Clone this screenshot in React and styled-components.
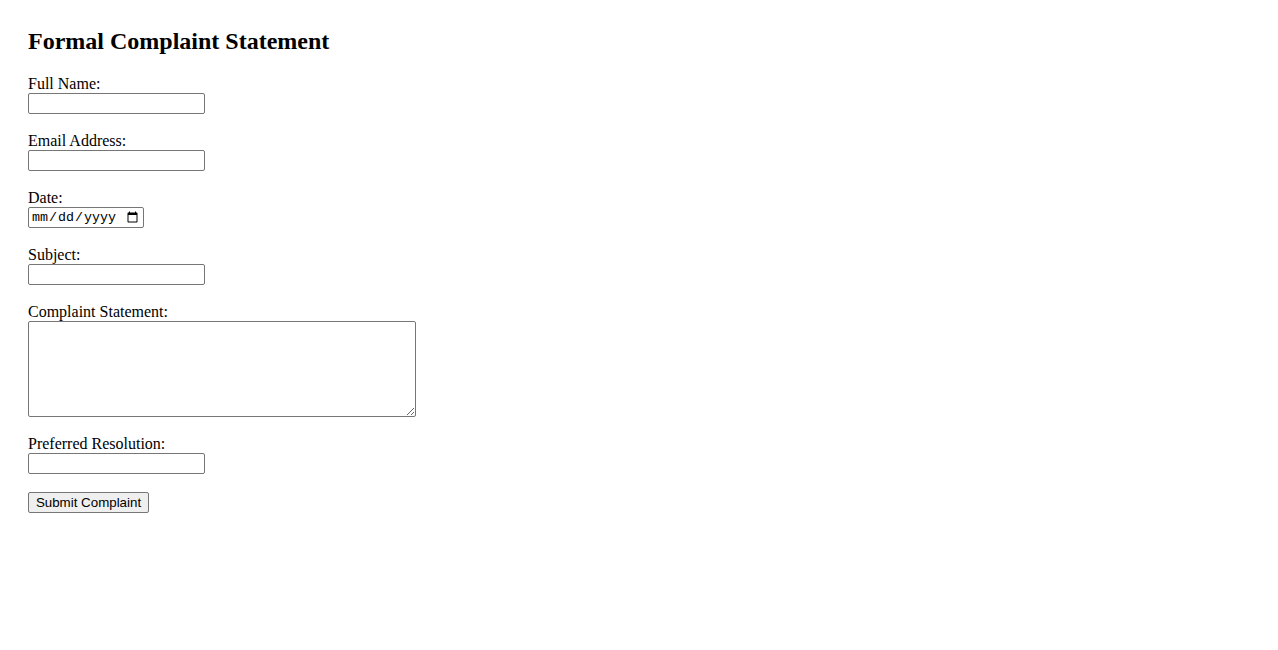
import React from 'react';
import styled, { createGlobalStyle } from 'styled-components';

const GlobalStyle = createGlobalStyle`
  html, body {
    margin: 0;
    padding: 0;
    background: #ffffff;
  }
  body {
    font-family: "Liberation Serif", "Times New Roman", serif;
    color: #000000;
  }
`;

const Page = styled.div`
  padding: 28px;
`;

const Title = styled.h2`
  margin: 0 0 20px;
  font-size: 24px;
  line-height: 26px;
  font-weight: bold;
`;

const Form = styled.form`
  display: flex;
  flex-direction: column;
  align-items: flex-start;
`;

const Field = styled.div`
  display: flex;
  flex-direction: column;
  align-items: flex-start;
  margin-bottom: 17px;
`;

const Label = styled.label`
  font-size: 16px;
  line-height: 19px;
`;

const Input = styled.input`
  box-sizing: border-box;
  width: ${(props) => props.$width || '177px'};
  height: 21px;
  margin: 0;
  padding: 1px 2px;
  border: 1px solid #767676;
  border-radius: 2px;
  background: #ffffff;
  font-family: ${(props) => (props.$mono ? '"Liberation Mono", monospace' : '"Liberation Sans", Arial, sans-serif')};
  font-size: 13.33px;
  color: #000000;
`;

const TextArea = styled.textarea`
  box-sizing: border-box;
  width: 388px;
  height: 96px;
  margin: 0;
  padding: 2px;
  border: 1px solid #767676;
  border-radius: 2px;
  font-family: "Liberation Mono", monospace;
  font-size: 13.33px;
`;

const SubmitButton = styled.button`
  box-sizing: border-box;
  width: 121px;
  height: 21px;
  margin: 1px 0 0;
  padding: 1px 6px;
  border: 1px solid #767676;
  border-radius: 2px;
  background: #efefef;
  font-family: "Liberation Sans", Arial, sans-serif;
  font-size: 13.33px;
  color: #000000;
  cursor: pointer;
`;

const fields = [
  { id: 'fullName', label: 'Full Name:', type: 'text' },
  { id: 'email', label: 'Email Address:', type: 'email' },
  { id: 'date', label: 'Date:', type: 'date' },
  { id: 'subject', label: 'Subject:', type: 'text' },
];

export default function App() {
  return (
    <Page>
      <GlobalStyle />
      <Title>Formal Complaint Statement</Title>
      <Form onSubmit={(e) => e.preventDefault()}>
        {fields.map((f) => (
          <Field key={f.id}>
            <Label htmlFor={f.id}>{f.label}</Label>
            {f.type === 'date' ? (
              <Input id={f.id} type="date" $width="116px" $mono />
            ) : (
              <Input id={f.id} type={f.type} />
            )}
          </Field>
        ))}
        <Field>
          <Label htmlFor="statement">Complaint Statement:</Label>
          <TextArea id="statement" />
        </Field>
        <Field>
          <Label htmlFor="resolution">Preferred Resolution:</Label>
          <Input id="resolution" type="text" />
        </Field>
        <SubmitButton type="submit">Submit Complaint</SubmitButton>
      </Form>
    </Page>
  );
}
